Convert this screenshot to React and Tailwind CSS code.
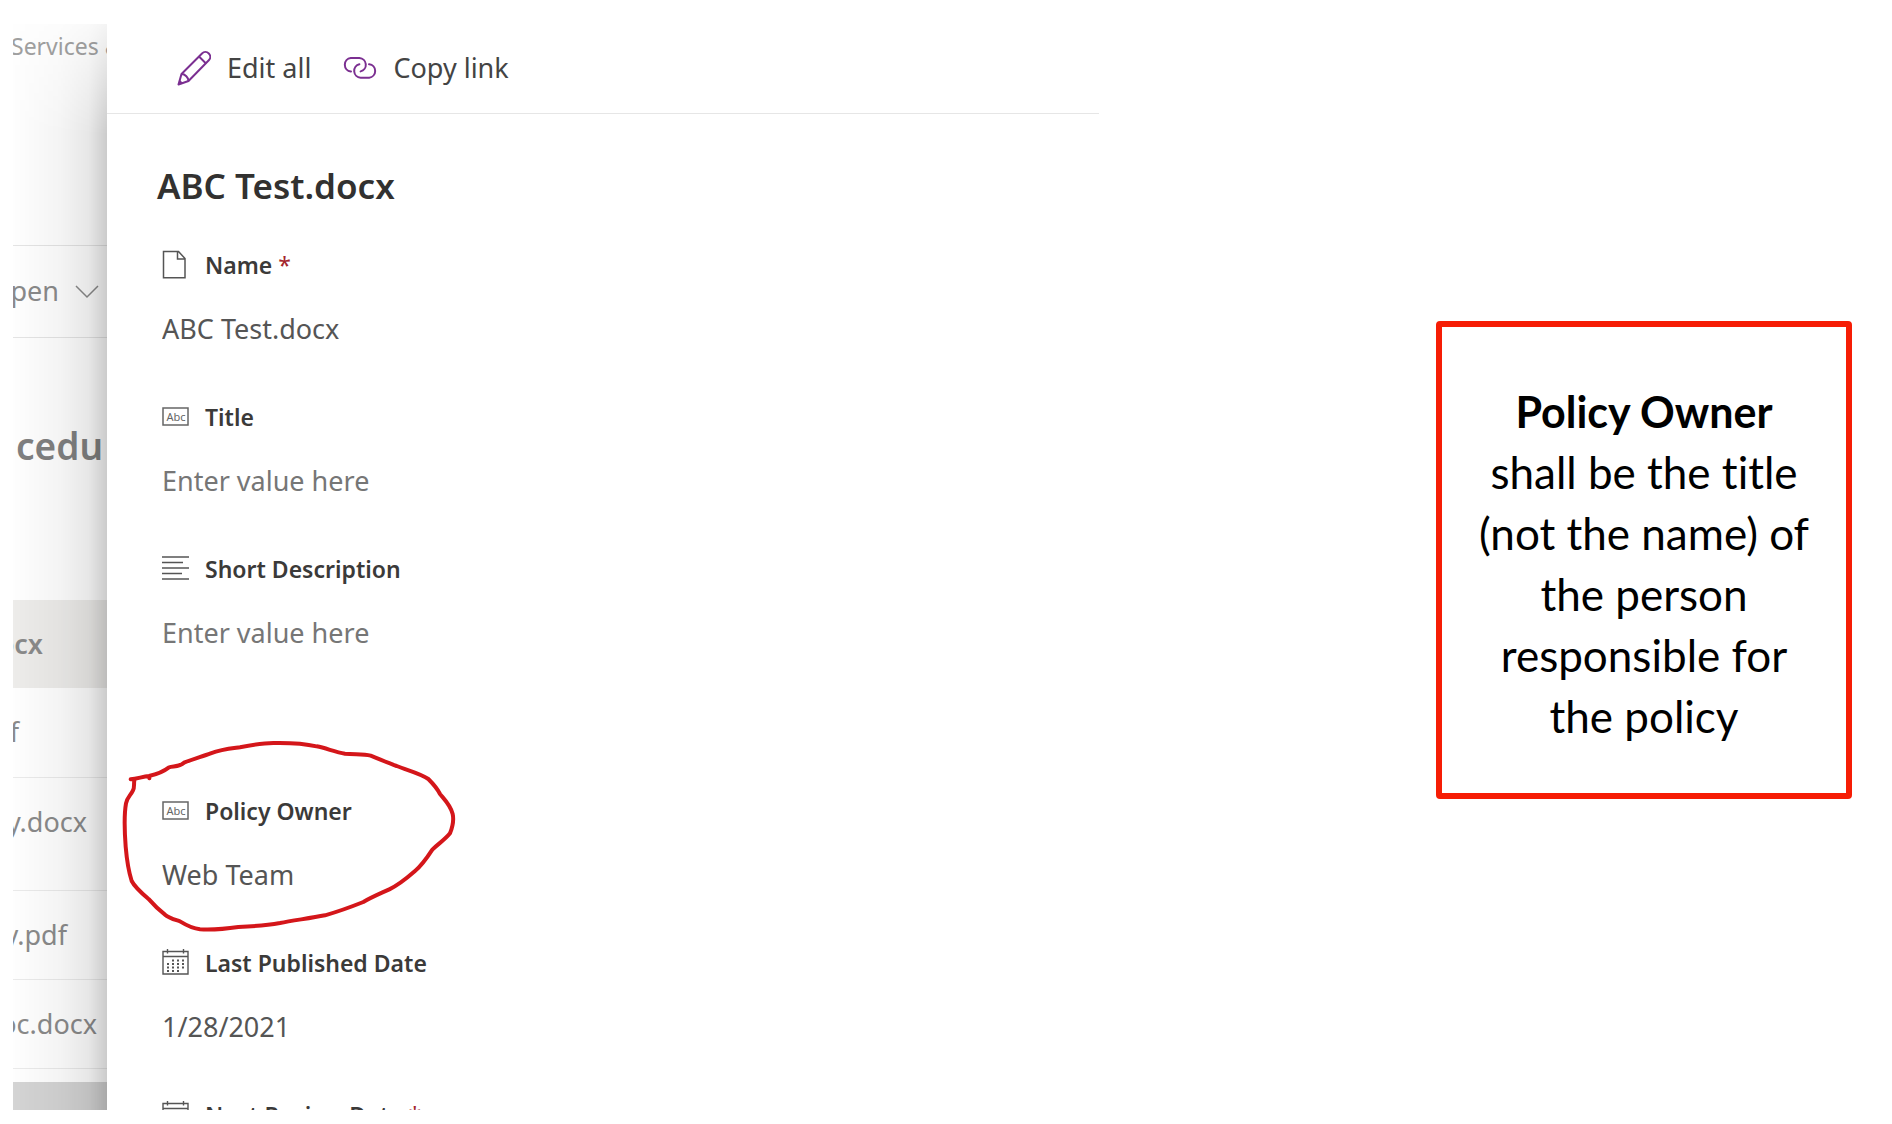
import React from 'react';

const fields = [
  { id: 'name', label: 'Name', icon: 'file', value: 'ABC Test.docx', required: true },
  { id: 'title', label: 'Title', icon: 'text', value: '' },
  { id: 'description', label: 'Short Description', icon: 'lines', value: '' },
  { id: 'owner', label: 'Policy Owner', icon: 'text', value: 'Web Team', circled: true },
  { id: 'published', label: 'Last Published Date', icon: 'calendar', value: '1/28/2021' },
];

const PencilIcon = () => (
  <svg viewBox="0 0 34 36" className="h-9 w-[34px]" fill="none" stroke="#7b2f91" strokeWidth="2" strokeLinejoin="round">
    <path d="M1.5 33.5 4.5 23 25 2.5a4.8 4.8 0 0 1 6.8 6.8L11.5 30Z" />
    <path d="M22 5.5 29 12.5M4.5 23c3.5 0 7 3.5 7 7M2.5 30l2.5 2.5" />
  </svg>
);

const LinkIcon = () => (
  <svg viewBox="0 0 34 24" className="h-6 w-[34px]" fill="none" stroke="#7b2f91" strokeWidth="2" strokeLinecap="round">
    <path d="M8 14.5h-.2a6.8 6.8 0 0 1 0-13.5h8.600a6.800 6.800 0 0 1 1.200 13.400" />
    <path d="M26 7.200h.2a6.800 6.800 0 0 1 0 13.500h-8.600a6.800 6.800 0 0 1-1.200-13.400" />
  </svg>
);

const FieldIcon = ({ type }) => {
  if (type === 'file') {
    return (
      <svg viewBox="0 0 27 29" className="h-[29px] w-[27px]" fill="none" stroke="#555" strokeWidth="1.5">
        <path d="M1.5 1.5h15l6.5 7v19.2H1.5ZM15.5 1.5v7.5H23" />
      </svg>
    );
  }
  if (type === 'text') {
    return (
      <svg viewBox="0 0 27 19" className="h-[19px] w-[27px]" fill="none">
        <rect x="1" y="1" width="25" height="17" stroke="#666" strokeWidth="1.5" />
        <text x="14" y="13.5" textAnchor="middle" fontSize="11" fill="#666" className="font-['Noto_Sans',sans-serif] font-normal">Abc</text>
      </svg>
    );
  }
  if (type === 'lines') {
    return (
      <svg viewBox="0 0 27 24" className="h-6 w-[27px]" stroke="#555" strokeWidth="1.3">
        <path d="M0 1h27M0 6.5h21M0 12h27M0 17.5h20M0 23h27" />
      </svg>
    );
  }
  return (
    <svg viewBox="0 0 27 26" className="h-[26px] w-[27px]" fill="none" stroke="#555">
      <path d="M1 2.5h25v22.5H1ZM1 7.5h25M5.5 0v4.5M21.5 0v4.5" strokeWidth="1.4" />
      <path d="M10 11.5h14M5 15h19M5 18.5h19M5 22h15" strokeWidth="1.8" strokeDasharray="2 3" />
    </svg>
  );
};

const FieldLabel = ({ id, icon, label, required }) => (
  <label htmlFor={id} className="flex h-10 items-center text-[23px] font-semibold text-[#3b3a39]">
    <span className="mr-4 flex w-[27px] items-center pb-0.5">
      <FieldIcon type={icon} />
    </span>
    {label}
    {required && <span className="ml-1.5 font-normal text-[#a4262c]">*</span>}
  </label>
);

// Hand drawn marker around the owner field
const MarkerCircle = () => (
  <svg
    viewBox="60 54 1011 585"
    className="pointer-events-none absolute -top-[53px] -left-[42px] h-[195px] w-[337px]"
    fill="none"
    stroke="#d4161a"
    strokeWidth="12"
    strokeLinecap="round"
    strokeLinejoin="round"
  >
    <path d="M148 175 L147 168 M92 178 C112 176 128 170 147 168 C170 163 190 155 207 142 C222 138 238 141 252 128 C278 117 305 110 332 100 C365 88 390 86 420 82 C460 74 490 69 520 69 C570 68 610 70 650 79 C680 85 705 96 735 101 C765 104 790 101 812 107 C840 118 860 127 890 138 C925 152 960 160 985 177 C1000 192 1012 206 1020 222 C1035 240 1052 256 1058 282 C1063 305 1056 325 1050 340 C1034 360 1014 372 997 389 C982 412 966 436 945 453 C921 474 895 495 868 508 C840 521 815 531 790 546 C750 562 710 576 675 586 C630 595 580 601 540 609 C500 616 460 619 415 621 C375 627 340 630 300 628 C275 625 258 615 240 604 C222 598 206 594 195 584 C177 570 160 553 147 538 C127 521 106 504 95 483 C86 455 80 415 77 380 C74 340 71 290 78 250 C82 231 92 226 99 211 C104 202 101 192 103 181" />
  </svg>
);

const Field = ({ field }) => (
  <div className={field.circled ? 'relative mt-[90px] h-[152px]' : 'h-[152px]'}>
    <FieldLabel {...field} />
    <input
      id={field.id}
      type="text"
      defaultValue={field.value}
      placeholder="Enter value here"
      className="mt-[22px] block h-[42px] w-full text-[27px] text-[#555] placeholder:text-[#767676] focus:outline-none"
    />
    {field.circled && <MarkerCircle />}
  </div>
);

// The slice of the library page that stays visible behind the panel
const Backdrop = () => (
  <div className="relative flex w-[94px] shrink-0 flex-col overflow-hidden bg-[#fefefe] text-[27px] whitespace-nowrap text-[#8a8a8a]">
    <div className="-ml-0.5 h-[221px] pt-1 text-[23px] leading-9 text-[#a0a0a0]">Services &amp;</div>
    <div className="flex h-[93px] items-center justify-end gap-4 border-y border-[#e4e4e4] pr-2">
      <span>pen</span>
      <svg viewBox="0 0 24 14" className="h-[14px] w-6 shrink-0" fill="none" stroke="#8a8a8a" strokeWidth="1.5">
        <path d="m1 1 11 11L23 1" />
      </svg>
    </div>
    <div className="flex h-[262px] items-start justify-end pt-[84px] pr-1 text-[37px] leading-[48px] font-semibold text-[#808080]">cedu</div>
    <div className="flex h-[88px] items-center justify-end bg-[#edecea] pr-16 font-semibold">ocx</div>
    <div className="flex h-[90px] items-center justify-end border-b border-[#eaeaea] pr-22">f</div>
    <div className="flex h-[113px] items-center justify-end border-b border-[#eaeaea] pr-5 pb-6">y.docx</div>
    <div className="flex h-[89px] items-center justify-end border-b border-[#eaeaea] pr-10">y.pdf</div>
    <div className="flex h-[89px] items-center justify-end border-b border-[#eaeaea] pr-2.5">oc.docx</div>
    <div className="mt-[13px] flex-1 bg-[#d4d4d4]" />
    <div className="absolute inset-0 bg-[linear-gradient(to_right,rgba(0,0,0,0),rgba(0,0,0,0.04)_50%,rgba(0,0,0,0.09)_80%,rgba(0,0,0,0.2))] mask-[linear-gradient(to_bottom,rgba(0,0,0,0.2),black_110px)]" />
  </div>
);

const App = () => {
  return (
    <main className="flex items-start bg-white pt-6 pr-10 pl-[13px] font-['Noto_Sans',sans-serif]">
      <div className="flex flex-1">
        <Backdrop />
        <section className="flex-1">
          <div className="flex h-[90px] items-center border-b border-[#e6e6e6] pl-[70px] text-[27px] text-[#444]">
            <button type="button" className="flex items-center gap-4">
              <PencilIcon />
              Edit all
            </button>
            <button type="button" className="ml-8 flex items-center gap-4">
              <LinkIcon />
              Copy link
            </button>
          </div>

          <h1 className="mt-12 pl-[50px] text-[35px] leading-[48px] font-semibold text-[#323130]">ABC Test.docx</h1>

          <form className="mt-[35px] pl-[55px]">
            {fields.map(field => (
              <Field key={field.id} field={field} />
            ))}
            {/* Only the top of the next field shows above the fold */}
            <div className="h-[15px] overflow-hidden">
              <FieldLabel id="review" icon="calendar" label="Next Review Date" required />
            </div>
          </form>
        </section>
      </div>

      <aside className="mt-[297px] ml-[337px] w-[416px] rounded-sm border-6 border-[#f61d05] px-7 pt-[54px] pb-[46px] text-center font-['Lato',sans-serif] text-[44px] leading-[61px] text-black [font-variant-ligatures:none]">
        <strong className="block text-[43px] leading-[61px] font-bold">Policy Owner</strong>
        shall be the title (not the name) of the person responsible for the policy
      </aside>
    </main>
  );
};

export default App;
